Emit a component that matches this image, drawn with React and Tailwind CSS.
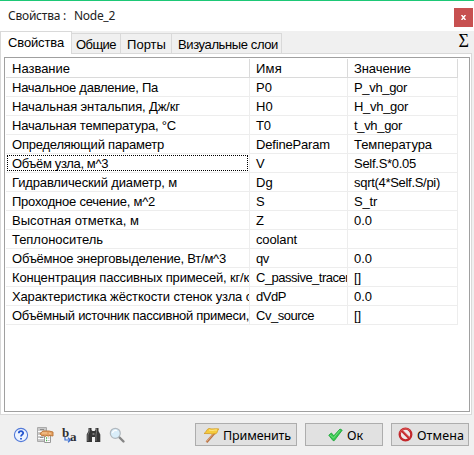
import React, { useLayoutEffect, useRef } from 'react';

// Spreads the tracking of a label so that it fills its measured width.
function Label({ w, children, className = '' }) {
  const ref = useRef(null);
  useLayoutEffect(() => {
    const el = ref.current;
    el.style.letterSpacing = '0px';
    const natural = el.getBoundingClientRect().width;
    el.style.letterSpacing = `${(w + 1 - natural) / el.textContent.length}px`;
  }, [w]);
  return <span ref={ref} className={`inline-block whitespace-pre ${className}`}>{children}</span>;
}

const rows = [
  ['Начальное давление, Па', 145, 'P0', 15, 'P_vh_gor', 52],
  ['Начальная энтальпия, Дж/кг', 167, 'H0', 16, 'H_vh_gor', 53],
  ['Начальная температура, °C', 163, 'T0', 14, 't_vh_gor', 47],
  ['Определяющий параметр', 151, 'DefineParam', 73, 'Температура', 77],
  ['Объём узла, м^3', 95, 'V', 8, 'Self.S*0.05', 61],
  ['Гидравлический диаметр, м', 164, 'Dg', 16, 'sqrt(4*Self.S/pi)', 85],
  ['Проходное сечение, м^2', 142, 'S', 8, 'S_tr', 22],
  ['Высотная отметка, м', 126, 'Z', 7, '0.0', 17],
  ['Теплоноситель', 90, 'coolant', 40, '', 0],
  ['Объёмное энерговыделение, Вт/м^3', 213, 'qv', 12, '0.0', 17],
  ['Концентрация пассивных примесей, кг/к', 236, 'C_passive_tracer', 92, '[]', 6],
  ['Характеристика жёсткости стенок узла с', 239, 'dVdP', 29, '0.0', 17],
  ['Объёмный источник пассивной примеси,', 236, 'Cv_source', 57, '[]', 6],
];

function Row({ r, header, focus }) {
  const line = header ? 'border-[#dadada]' : 'border-[#ededed]';
  const cell = `relative overflow-hidden border-r ${line}`;
  return (
    <div className={`flex h-[19px] w-[452px] shrink-0 border-b leading-[20px] ${line}`}>
      <div className={`${cell} w-[244px] pl-[6px]`}>
        <Label w={r[1]}>{r[0]}</Label>
        {focus && <div className="absolute top-[1px] left-[1px] h-[16px] w-[241px] border border-dotted border-black" />}
      </div>
      <div className={`${cell} w-[98px] pl-[6px]`}><Label w={r[3]}>{r[2]}</Label></div>
      <div className={`${cell} w-[110px] pl-[6px]`}>{r[4] && <Label w={r[5]}>{r[4]}</Label>}</div>
    </div>
  );
}

function HelpIcon() {
  return (
    <svg width="16" height="16" viewBox="0 0 16 16">
      <circle cx="8" cy="8" r="6.6" fill="#edf4ff" stroke="#5279d8" strokeWidth="1.1" />
      <path d="M5.8 6.2C5.9 3.6 10.2 3.6 10.2 6C10.2 7.6 8 7.8 8 9.6M8 11v1.5" fill="none" stroke="#2455cf" strokeWidth="1.8" />
    </svg>
  );
}

function PropertiesIcon() {
  return (
    <svg width="17" height="17" viewBox="0 0 17 17">
      <path d="M.5 .5h9v14h-9z" fill="#c9c9c9" stroke="#aaa" />
      <path d="M1 4.5h8M1 8.5h8M1 11.5h8" stroke="#fff" />
      <path d="M3 2.5h4M3 6.5h3M3 10.5h3" stroke="#8c8c8c" />
      <path d="M7.5 8.5h6v7h-6z" fill="#fff" stroke="#999" />
      <path d="M9 11h1M9 13.5h1" stroke="#43b945" strokeWidth="1.3" />
      <path d="M10.5 11h2M10.5 13.5h2" stroke="#bbb" />
      <path d="M3 6.5L6 4h6l4 1v4l-3-.5-2 .7-1-.8-2 1-1-1-2 .3-1-.7z" fill="#e5a365" stroke="#b97231" strokeWidth=".9" />
      <path d="M5 6h5M12 6l2 1" stroke="#f8cd99" />
    </svg>
  );
}

function RenameIcon() {
  return (
    <span className="relative block h-[17px] w-[16px] font-['Liberation_Serif',serif] text-[13px] leading-none text-[#303030]">
      <b className="absolute -top-[1px] left-0 font-bold">b</b>
      <b className="absolute top-[3px] left-[8px] font-bold">a</b>
      <svg className="absolute top-[10px] left-[2px]" width="8" height="6" viewBox="0 0 8 6">
        <path d="M1 0v3h5M4 .8L6.5 3 4 5.2" fill="none" stroke="#3b6fd1" strokeWidth="1.2" />
      </svg>
    </span>
  );
}

function BinocularsIcon() {
  return (
    <svg width="15" height="16" viewBox="0 0 15 16">
      <path d="M2.5 1h3v2l1 1h2l1-1V1h3v3l1.8 3.5V15H9v-5H6v5H.7V7.5L2.5 4z" fill="#353535" />
      <path d="M3.3 1.5v3L1.9 8v6M10.5 1.5v3L10 8v6" fill="none" stroke="#858585" strokeWidth=".8" />
      <path d="M6.5 6h2v2h-2z" fill="#777" />
    </svg>
  );
}

function SearchIcon() {
  return (
    <svg width="17" height="17" viewBox="0 0 17 17">
      <path d="M10 10l4.5 4.5" stroke="#858585" strokeWidth="2.4" strokeLinecap="round" />
      <circle cx="6.3" cy="6.3" r="5" fill="#d9edf9" stroke="#b1b8be" strokeWidth="1.2" />
      <path d="M3.5 6C4 3.8 6 3 8 3.7" fill="none" stroke="#fff" strokeWidth="1.2" />
    </svg>
  );
}

function FlagIcon() {
  return (
    <svg width="17" height="17" viewBox="0 0 17 17">
      <path d="M3.5 15.2L12 5.5" stroke="#b87548" strokeWidth="2.3" />
      <path d="M3.5 14.6L11 6" stroke="#e5a879" strokeWidth="1" />
      <path d="M6 1.5c3 1 5 0 9.8.4-1.8 2-.8 3.2-3 5-2.3-.8-3.4 1-5.2-.3L1 6.5C3.5 5.5 3.2 2.2 6 1.5z" fill="#f5cb3d" stroke="#d39b24" strokeWidth=".8" />
      <path d="M6 3c3 1 5-.2 8 0" fill="none" stroke="#ffe889" />
    </svg>
  );
}

function CheckIcon() {
  return (
    <svg width="15" height="14" viewBox="0 0 15 14">
      <path d="M.8 7.2L3.4 5l2.4 2.8L12 1l2.2 1.2L6.3 12.6H5z" fill="#37c950" stroke="#20a63b" strokeWidth=".9" />
      <path d="M2 7l3.5 3L12 2.2" fill="none" stroke="#72e080" />
    </svg>
  );
}

function CancelIcon() {
  return (
    <svg width="15" height="15" viewBox="0 0 15 15">
      <circle cx="7.5" cy="7.5" r="5.8" fill="#efe8e8" stroke="#c3282c" strokeWidth="2.3" />
      <path d="M3.6 3.6l7.8 7.8" stroke="#c3282c" strokeWidth="2.3" />
      <path d="M2 6C3 1.5 9 .3 12 3.7M4 3.2l8 8" fill="none" stroke="#e36361" strokeWidth=".8" />
    </svg>
  );
}

const tab = 'h-[20px] border-t border-r border-[#d9d9d9] bg-[#f0f0f0] pt-[2px] leading-[18px]';
const button = "flex h-[23px] border border-[#adadad] bg-[#e1e1e1] font-['Noto_Sans',sans-serif] text-[12.5px] leading-[23px]";

export default function App() {
  return (
    <div className="flex h-[455px] w-[474px] flex-col overflow-hidden bg-[#f0f0f0] font-['Liberation_Sans',Arial,sans-serif] text-[13px] text-black">
      <header className="flex h-[31px] shrink-0 border-t border-[#1dc876] bg-white pl-[8px] font-['Noto_Sans',sans-serif] text-[12px] text-[#222]">
        <div className="w-[66px] pt-[6px] leading-[18px]"><Label w={57}>Свойства :</Label></div>
        <div className="pt-[6px] leading-[18px]"><Label w={40}>Node_2</Label></div>
        <button className="mt-[7px] mr-[1px] ml-auto flex h-[19px] w-[19px] items-center justify-center bg-[#c75050] text-white">
          <svg width="5" height="5" viewBox="0 0 5 5"><path d="M.5 0L4.5 5M4.5 0L.5 5" stroke="currentColor" strokeWidth="1.5" /></svg>
        </button>
      </header>
      <nav className="flex h-[22px] shrink-0 items-end">
        <div className="z-10 -mb-px h-[23px] w-[72px] border border-b-0 border-[#d9d9d9] bg-white pt-[2px] pl-[7px] leading-[18px]"><Label w={55}>Свойства</Label></div>
        <div className={`${tab} w-[49px] pl-[4px]`}><Label w={39}>Общие</Label></div>
        <div className={`${tab} w-[51px] pl-[6px]`}><Label w={38}>Порты</Label></div>
        <div className={`${tab} w-[110px] pl-[6px]`}><Label w={99}>Визуальные слои</Label></div>
        <div className="mr-[5px] ml-auto self-start font-['Liberation_Serif',serif] text-[18px] leading-[20px]">Σ</div>
      </nav>
      <main className="h-[362px] w-[472px] shrink-0 border border-[#d9d9d9] bg-white pt-[3px] pr-[1px] pb-[2px] pl-[3px]">
        <div className="flex h-[355px] w-[466px] flex-col border border-[#a0a0a0] bg-white pt-[1px] pl-[1px]">
          <Row header r={['Название', 57, 'Имя', 25, 'Значение', 56]} />
          {rows.map((r, i) => <Row key={r[0]} r={r} focus={i === 4} />)}
        </div>
      </main>
      <footer className="flex pt-[8px]">
        <div className="flex w-[195px] gap-[8px] pt-[4px] pl-[13px]">
          <HelpIcon /><PropertiesIcon /><RenameIcon /><BinocularsIcon /><SearchIcon />
        </div>
        <div className="flex gap-[8px]">
          <button className={`${button} w-[102px]`}>
            <span className="mt-[3px] mr-[3px] ml-[7px] w-[17px]"><FlagIcon /></span><Label w={67}>Применить</Label>
          </button>
          <button className={`${button} w-[78px]`}>
            <span className="mt-[4px] mr-[4px] ml-[22px] w-[15px]"><CheckIcon /></span><Label w={15}>Ок</Label>
          </button>
          <button className={`${button} w-[78px]`}>
            <span className="mt-[3px] mr-[4px] ml-[6px] w-[15px]"><CancelIcon /></span><Label w={46}>Отмена</Label>
          </button>
        </div>
      </footer>
    </div>
  );
}
